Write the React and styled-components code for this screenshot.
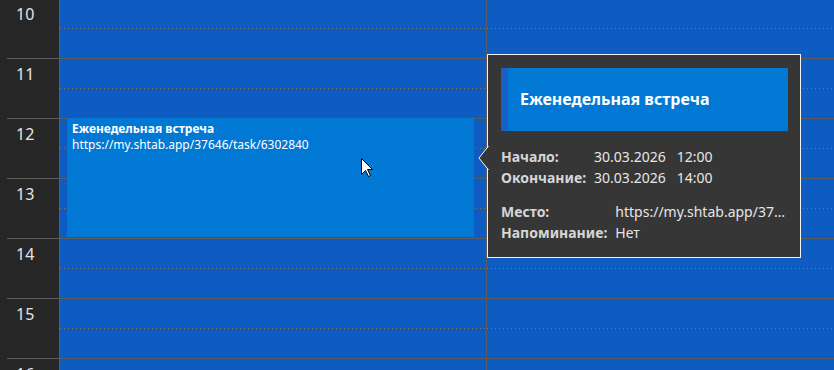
import React from "react";
import styled, { createGlobalStyle } from "styled-components";

const GlobalStyle = createGlobalStyle`
  html, body {
    margin: 0;
    padding: 0;
    background: #262626;
    font-family: "Noto Sans", "Liberation Sans", sans-serif;
  }
`;

const LINE = "#5c5c5c";
const BG_BLUE = "#0e5bc2";
const ACCENT = "#0078d4";

const Page = styled.div`
  display: flex;
  width: 834px;
  height: 370px;
  overflow: hidden;
  background: ${BG_BLUE};
`;

const Gutter = styled.div`
  flex: 0 0 59px;
  background: #262626;
  border-right: 1px solid ${LINE};
  display: flex;
  flex-direction: column;
  margin-top: -2px;
`;

const HourLabel = styled.div`
  flex: 0 0 60px;
  box-sizing: border-box;
  margin-left: 7px;
  border-top: 1px solid ${LINE};
  padding: 5px 0 0 9px;
  color: #e4e4e4;
  font-size: 16px;
  line-height: 20px;
`;

const Board = styled.div`
  flex: 1;
  position: relative;
`;

const Rows = styled.div`
  display: flex;
  flex-direction: column;
  margin-top: -2px;
`;

const Row = styled.div`
  flex: 0 0 60px;
  box-sizing: border-box;
  display: grid;
  grid-template-columns: 427px 1fr;
  border-top: 1px solid ${LINE};
`;

const Cell = styled.div`
  position: relative;
  border-right: ${(p) => (p.$divider ? `1px solid ${LINE}` : "none")};

  &::after {
    content: "";
    position: absolute;
    left: 0;
    right: 0;
    top: 29px;
    height: 1px;
    background: repeating-linear-gradient(
      to right,
      #7d7566 0 1px,
      transparent 1px 4px
    );
  }
`;

const EventBlock = styled.div`
  position: absolute;
  left: 7px;
  top: 118px;
  width: 407px;
  height: 119px;
  box-sizing: border-box;
  background: ${ACCENT};
  padding: 3px 5px;
  color: #fff;
  font-size: 12px;
  line-height: 16px;
`;

const EventTitle = styled.div`
  font-weight: bold;
`;

const Tooltip = styled.div`
  position: absolute;
  left: 427px;
  top: 54px;
  width: 314px;
  box-sizing: border-box;
  background: #363636;
  border: 1px solid #f2f2f2;
  padding: 13px 12px 15px 13px;
  color: #e6e6e6;
  font-size: 14px;
`;

const Arrow = styled.svg`
  position: absolute;
  left: -10px;
  top: 91px;
`;

const Header = styled.div`
  height: 63px;
  display: flex;
  align-items: center;
  background: ${ACCENT};
  border-left: 7px solid #1a5fc8;
  padding: 0 0 2px 12px;
  box-sizing: border-box;
  color: #fff;
  font-size: 16px;
  font-weight: bold;
`;

const Details = styled.div`
  display: grid;
  grid-template-columns: auto 1fr;
  column-gap: 8px;
  row-gap: 2px;
  line-height: 19px;
  margin-top: ${(p) => p.$top}px;
`;

const Label = styled.span`
  font-weight: bold;
  color: #d6d6d6;
`;

const Value = styled.span`
  display: flex;
  gap: 11px;
  min-width: 0;
  overflow: hidden;
  white-space: nowrap;
  text-overflow: ellipsis;
`;

const Ellipsis = styled.span`
  overflow: hidden;
  text-overflow: ellipsis;
  white-space: nowrap;
`;

const Cursor = styled.svg`
  position: absolute;
  left: 301px;
  top: 158px;
`;

const hours = [10, 11, 12, 13, 14, 15, 16];

export default function App() {
  return (
    <>
      <GlobalStyle />
      <Page>
        <Gutter>
          {hours.map((h) => (
            <HourLabel key={h}>{h}</HourLabel>
          ))}
        </Gutter>
        <Board>
          <Rows>
            {hours.map((h) => (
              <Row key={h}>
                <Cell $divider />
                <Cell />
              </Row>
            ))}
          </Rows>

          <EventBlock>
            <EventTitle>Еженедельная встреча</EventTitle>
            <div>https://my.shtab.app/37646/task/6302840</div>
          </EventBlock>

          <Cursor width="13" height="20" viewBox="0 0 13 20">
            <path
              d="M0.5 0.5 L0.5 16.5 L4.5 12.5 L7.5 18.5 L9.5 17.5 L6.5 11.5 L11.5 11.5 Z"
              fill="#fff"
              stroke="#000"
              strokeWidth="1"
              strokeLinejoin="miter"
            />
          </Cursor>

          <Tooltip>
            <Arrow width="11" height="24" viewBox="0 0 11 24">
              <polygon points="11,0 1,12 11,24" fill="#363636" />
              <polyline
                points="10.5,0 1,12 10.5,24"
                fill="none"
                stroke="#f2f2f2"
                strokeWidth="1"
              />
            </Arrow>
            <Header>Еженедельная встреча</Header>
            <Details $top={16}>
              <Label>Начало:</Label>
              <Value>
                <span>30.03.2026</span>
                <span>12:00</span>
              </Value>
              <Label>Окончание:</Label>
              <Value>
                <span>30.03.2026</span>
                <span>14:00</span>
              </Value>
            </Details>
            <Details $top={15}>
              <Label>Место:</Label>
              <Value>
                <Ellipsis>https://my.shtab.app/37646/task/6302840</Ellipsis>
              </Value>
              <Label>Напоминание:</Label>
              <Value>Нет</Value>
            </Details>
          </Tooltip>
        </Board>
      </Page>
    </>
  );
}
